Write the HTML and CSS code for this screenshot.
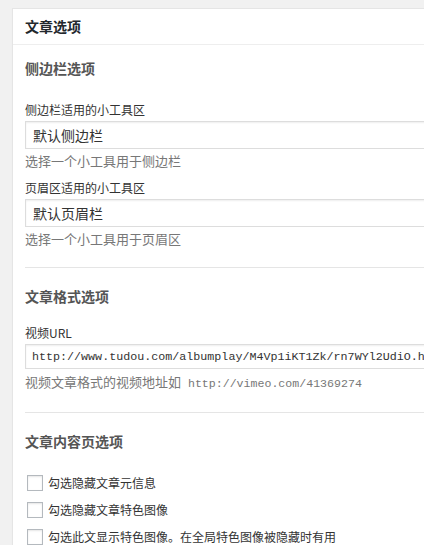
FILE: index.html
```html
<!DOCTYPE html>
<html lang="zh-CN">
<head>
    <meta charset="UTF-8">
    <meta name="viewport" content="width=device-width, initial-scale=1.0">
    <title>文章选项</title>
    <link rel="stylesheet" href="styles.css">
</head>
<body>
    <div class="postbox">
        <h2 class="hndle">文章选项</h2>
        <div class="inside">
            <!-- 侧边栏 -->
            <div class="section">
                <h3 class="opt-title">侧边栏选项</h3>
                <div class="field first">
                    <label class="field-label" for="sidebar">侧边栏适用的小工具区</label>
                    <input class="text-input" id="sidebar" type="text" value="默认侧边栏" readonly>
                    <p class="desc">选择一个小工具用于侧边栏</p>
                </div>
                <div class="field">
                    <label class="field-label" for="header-area">页眉区适用的小工具区</label>
                    <input class="text-input" id="header-area" type="text" value="默认页眉栏" readonly>
                    <p class="desc">选择一个小工具用于页眉区</p>
                </div>
            </div>

            <!-- 文章格式 -->
            <div class="section">
                <h3 class="opt-title">文章格式选项</h3>
                <div class="field field-url">
                    <label class="field-label" for="video-url">视频URL</label>
                    <input class="text-input url-input" id="video-url" type="text" value="http://www.tudou.com/albumplay/M4Vp1iKT1Zk/rn7WYl2UdiO.html">
                    <p class="desc">视频文章格式的视频地址如 <code>http://vimeo.com/41369274</code></p>
                </div>
            </div>

            <!-- 文章内容页 -->
            <div class="section">
                <h3 class="opt-title">文章内容页选项</h3>
                <div class="check-list">
                    <label class="check-row"><input type="checkbox" class="check">勾选隐藏文章元信息</label>
                    <label class="check-row"><input type="checkbox" class="check">勾选隐藏文章特色图像</label>
                    <label class="check-row"><input type="checkbox" class="check">勾选此文显示特色图像。在全局特色图像被隐藏时有用</label>
                </div>
            </div>
        </div>
    </div>
</body>
</html>
```

FILE: styles.css
```css
body {
    margin: 0;
    padding: 8px 0 0 12px;
    background-color: #f1f1f1;
    color: #333;
    font-family: "Noto Sans CJK SC", sans-serif;
    overflow: hidden;
}
.postbox {
    width: 480px;
    background-color: #fff;
    border: 1px solid #e5e5e5;
    box-shadow: 0 1px 1px rgba(0, 0, 0, 0.04);
}
.hndle {
    margin: 0;
    height: 35px;
    line-height: 35px;
    padding: 0 12px;
    font-size: 14px;
    font-weight: bold;
    color: #23282d;
    border-bottom: 1px solid #eee;
}
.inside {
    padding: 0 12px;
}
.section {
    padding: 18px 0 19px;
}
.section:first-child {
    padding-top: 13px;
}
.section + .section {
    border-top: 1px solid #e5e5e5;
}
.opt-title {
    margin: 0 0 18px;
    font-size: 14px;
    line-height: 20px;
    font-weight: bold;
    color: #555;
}
.field.first {
    padding-top: 5px;
}
.field + .field {
    margin-top: 9px;
}
.field-label {
    display: block;
    font-size: 12px;
    line-height: 18px;
    margin-bottom: 2px;
    color: #333;
}
.text-input {
    display: block;
    width: 100%;
    height: 28px;
    box-sizing: border-box;
    margin: 0;
    padding: 0 7px;
    border: 1px solid #ddd;
    box-shadow: inset 0 1px 2px rgba(0, 0, 0, 0.07);
    background-color: #fff;
    color: #333;
    font-family: "Noto Sans CJK SC", sans-serif;
    font-size: 14px;
    outline: none;
}
.url-input {
    height: 25px;
    padding: 0 6px;
    font-family: "Liberation Mono", monospace;
    font-size: 11.7px;
}
.desc {
    margin: 3px 0 0;
    font-size: 13px;
    line-height: 18px;
    color: #777;
}
.field-url .desc {
    margin-top: 4px;
}
.desc code {
    margin-left: 4px;
    font-family: "Liberation Mono", monospace;
    font-size: 11.6px;
}
.check-list {
    margin-top: 11px;
}
.check-row {
    display: flex;
    align-items: center;
    height: 27px;
    font-size: 12px;
    color: #333;
}
.check {
    -webkit-appearance: none;
    appearance: none;
    width: 16px;
    height: 16px;
    margin: 0 5px 0 2px;
    border: 1px solid #b4b9be;
    background-color: #fff;
    box-shadow: inset 0 1px 2px rgba(0, 0, 0, 0.1);
}
```
